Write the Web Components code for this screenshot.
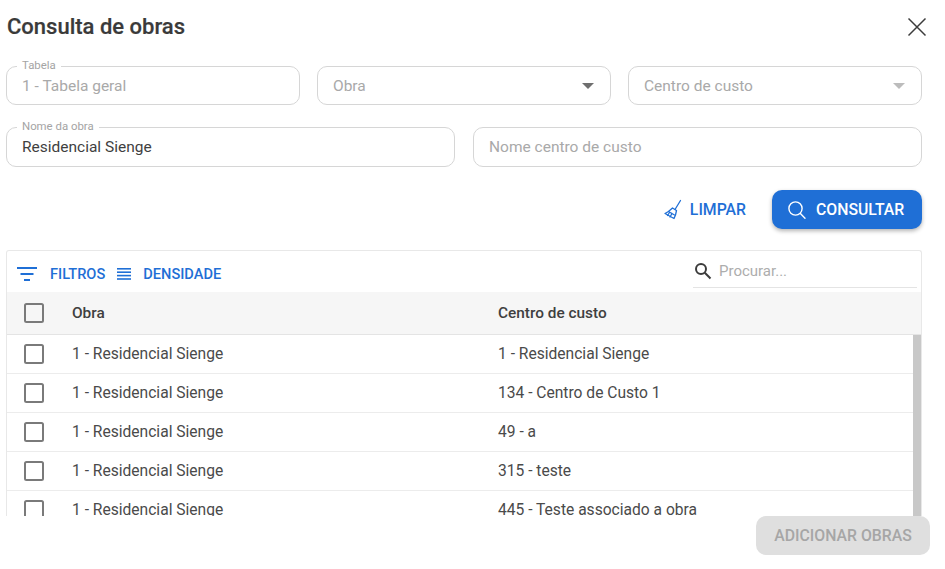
<!DOCTYPE html>
<html lang="pt"><head><meta charset="utf-8"><title>Consulta de obras</title>
<style>
html,body{margin:0;padding:0;background:#fff;font-family:Roboto,"Liberation Sans",sans-serif}
body{width:945px;height:569px;overflow:hidden}
</style></head><body>
<x-dialog>
  <span slot="title">Consulta de obras</span>
  <x-form-row cols="294px 294px 294px" gap="17px" h="39px">
    <x-field label="Tabela" placeholder="1 - Tabela geral"></x-field>
    <x-field placeholder="Obra" arrow="dark"></x-field>
    <x-field placeholder="Centro de custo" arrow="light"></x-field>
  </x-form-row>
  <x-form-row cols="449px 449px" gap="18px" h="40px" top="22px">
    <x-field label="Nome da obra" value="Residencial Sienge"></x-field>
    <x-field placeholder="Nome centro de custo"></x-field>
  </x-form-row>
  <x-actions>
    <x-button kind="text" icon="broom">LIMPAR</x-button>
    <x-button kind="primary" icon="search">CONSULTAR</x-button>
  </x-actions>
  <x-grid>
    <x-grid-row a="1 - Residencial Sienge" b="1 - Residencial Sienge"></x-grid-row>
    <x-grid-row a="1 - Residencial Sienge" b="134 - Centro de Custo 1"></x-grid-row>
    <x-grid-row a="1 - Residencial Sienge" b="49 - a"></x-grid-row>
    <x-grid-row a="1 - Residencial Sienge" b="315 - teste"></x-grid-row>
    <x-grid-row a="1 - Residencial Sienge" b="445 - Teste associado a obra"></x-grid-row>
  </x-grid>
  <x-button slot="footer" kind="disabled">ADICIONAR OBRAS</x-button>
</x-dialog>
<script>
const ICONS={
 broom:'<svg width="20" height="22" viewBox="0 0 20 22" fill="none" stroke="#1f6fd6" stroke-width="1.3" stroke-linejoin="round" stroke-linecap="round"><path d="M17.5 1.5 12 10.5"/><path d="M9.5 9 13.5 11.5 12.5 16 11 19.5 2 14.5 5.5 12.5Z"/><path d="M5.5 12.5 11.5 16M7 18 9 14.5M4.5 16.5 6.5 13.5"/></svg>',
 search:'<svg width="20" height="20" viewBox="0 0 20 20" fill="none" stroke="#fff" stroke-width="1.4" stroke-linecap="round"><circle cx="8.5" cy="8.5" r="6.6"/><path d="M13.4 13.4 18 18.2"/></svg>'
};
function def(name,css,html,extra){
  customElements.define(name,class extends HTMLElement{
    connectedCallback(){
      if(this.shadowRoot)return;
      const r=this.attachShadow({mode:'open'});
      r.innerHTML='<style>'+css+'</style>'+(typeof html==='function'?html(this):html);
      if(extra)extra(this,r);
    }
  });
}
def('x-dialog',`
:host{display:flex;flex-direction:column;width:945px;height:569px;box-sizing:border-box;color:#3c3c3c}
header{display:flex;justify-content:space-between;align-items:center;height:54px;padding:0 18px 0 7px;flex:none}
h1{margin:0;font:500 22px/26px Roboto,sans-serif;color:#3a3a3a;-webkit-text-stroke:.2px #3a3a3a}
svg{display:block}
main{padding:12px 23px 0 6px;flex:none}
footer{display:flex;justify-content:flex-end;padding-right:15px;flex:none}
`,`<header><h1><slot name="title"></slot></h1>
<svg width="20" height="20" viewBox="0 0 20 20" stroke="#3c3c3c" stroke-width="1.5" fill="none"><path d="M1.5 1.5 18.5 18.5M18.5 1.5 1.5 18.5"/></svg></header>
<main><slot></slot></main><footer><slot name="footer"></slot></footer>`);
def('x-form-row',`:host{display:grid}`,`<slot></slot>`,(h)=>{
  h.style.gridTemplateColumns=h.getAttribute('cols');
  h.style.columnGap=h.getAttribute('gap');
  h.style.height=h.getAttribute('h');
  h.style.marginTop=h.getAttribute('top')||'0';
});
def('x-field',`
:host{display:flex;align-items:center;position:relative;box-sizing:border-box;height:100%;border:1.3px solid #d6d6d6;border-radius:10px;padding:0 15px;font:400 15.5px/20px Roboto,sans-serif;background:#fff}
.l{position:absolute;left:10px;top:-9px;padding:0 5px;background:#fff;font-size:11.4px;line-height:14px;color:#a4a4a4}
.p{color:#a9a9a9;flex:1}.v{color:#3f3f3f;flex:1}
.a{width:0;height:0;border-left:6px solid transparent;border-right:6px solid transparent;border-top:6.5px solid #6f6f6f;margin-right:1px}
.a.light{border-top-color:#bcbcbc}
`,h=>{
  const g=n=>h.getAttribute(n);
  return (g('label')?`<span class="l">${g('label')}</span>`:'')+
   (g('value')?`<span class="v">${g('value')}</span>`:`<span class="p">${g('placeholder')}</span>`)+
   (g('arrow')?`<span class="a ${g('arrow')}"></span>`:'');
});
def('x-actions',`:host{display:flex;justify-content:flex-end;align-items:center;gap:26px;height:39px;margin-top:23px}`,`<slot></slot>`);
def('x-button',`
:host{display:inline-flex;align-items:center;box-sizing:border-box;height:39px;border-radius:10px;font:500 15.8px/20px Roboto,sans-serif;white-space:nowrap}
:host([kind=primary]){background:#1f6fd6;color:#fff;width:150px;padding-left:15px;gap:9px;box-shadow:0 2px 4px rgba(0,0,0,.3)}
:host([kind=text]){color:#1f6fd6;gap:7px}
:host([kind=disabled]){background:#dfdfdf;color:#a6a6a6;width:174px;justify-content:center}
svg{display:block}
`,h=>(ICONS[h.getAttribute('icon')]||'')+'<slot></slot>');
def('x-grid',`
:host{display:block;box-sizing:border-box;height:266px;margin-top:21px;border:1px solid #e8e8e8;border-bottom:0;border-radius:3px 3px 0 0;overflow:hidden;position:relative;font:400 15.6px/20px Roboto,sans-serif}
.bar{display:flex;align-items:center;height:41px;color:#1f6fd6;font:500 14.6px/20px Roboto,sans-serif;padding-left:9px}
.bar svg{display:block}
.f{margin:5px 11px 0 0;display:flex;align-items:center;gap:12px}
.d{margin:5px 0 0 0;display:flex;align-items:center;gap:11px}
.s{margin-left:auto;margin-right:4px;width:224px;height:37px;box-sizing:border-box;border-bottom:1px solid #e4e4e4;display:flex;align-items:center;gap:7px;padding:4px 0 0 1px;font:400 15px/20px Roboto,sans-serif;color:#adadad;margin-top:-4px}
.head{display:grid;grid-template-columns:65px 426px 1fr;align-items:center;height:42.6px;box-sizing:border-box;background:#f6f6f6;border-bottom:1px solid #e4e4e4;font-weight:500;font-size:15.4px;color:#3f3f3f}
.box{justify-self:center;margin-left:-12px}
.body{height:181.4px;overflow:hidden;position:relative}
.sb{position:absolute;right:0;top:0;bottom:0;width:8px;background:#c8c8c8}
`,`<div class="bar">
<div class="f"><svg width="22" height="16" viewBox="0 0 22 16" fill="#1f6fd6"><rect x="1" y="1" width="20" height="2"/><rect x="4.5" y="7" width="13" height="2"/><rect x="8" y="13" width="6" height="2"/></svg><span>FILTROS</span></div>
<div class="d"><svg width="16" height="14" viewBox="0 0 16 14" fill="#1f6fd6"><rect x="1" y="1" width="14" height="1.6"/><rect x="1" y="4.4" width="14" height="1.6"/><rect x="1" y="7.8" width="14" height="1.6"/><rect x="1" y="11.2" width="14" height="1.6"/></svg><span>DENSIDADE</span></div>
<div class="s"><svg width="18" height="18" viewBox="0 0 18 18" fill="none" stroke="#3c3c3c" stroke-width="2"><circle cx="7" cy="7" r="5"/><path d="M10.8 10.8 16.5 16.5"/></svg><span>Procurar...</span></div>
</div>
<div class="head"><x-check class="box"></x-check><span>Obra</span><span>Centro de custo</span></div>
<div class="body"><slot></slot><div class="sb"></div></div>`);
def('x-check',`:host{display:block;width:20px;height:20px;box-sizing:border-box;border:2px solid #7a7a7a;border-radius:2.5px;background:transparent}`,``);
def('x-grid-row',`
:host{display:grid;grid-template-columns:65px 426px 1fr;align-items:center;height:39px;box-sizing:border-box;border-bottom:1px solid #ececec;color:#4a4a4a;font:400 15.6px/20px Roboto,sans-serif}
x-check{justify-self:center;margin-left:-12px}
`,h=>`<x-check></x-check><span>${h.getAttribute('a')}</span><span>${h.getAttribute('b')}</span>`);
</script>
</body></html>
